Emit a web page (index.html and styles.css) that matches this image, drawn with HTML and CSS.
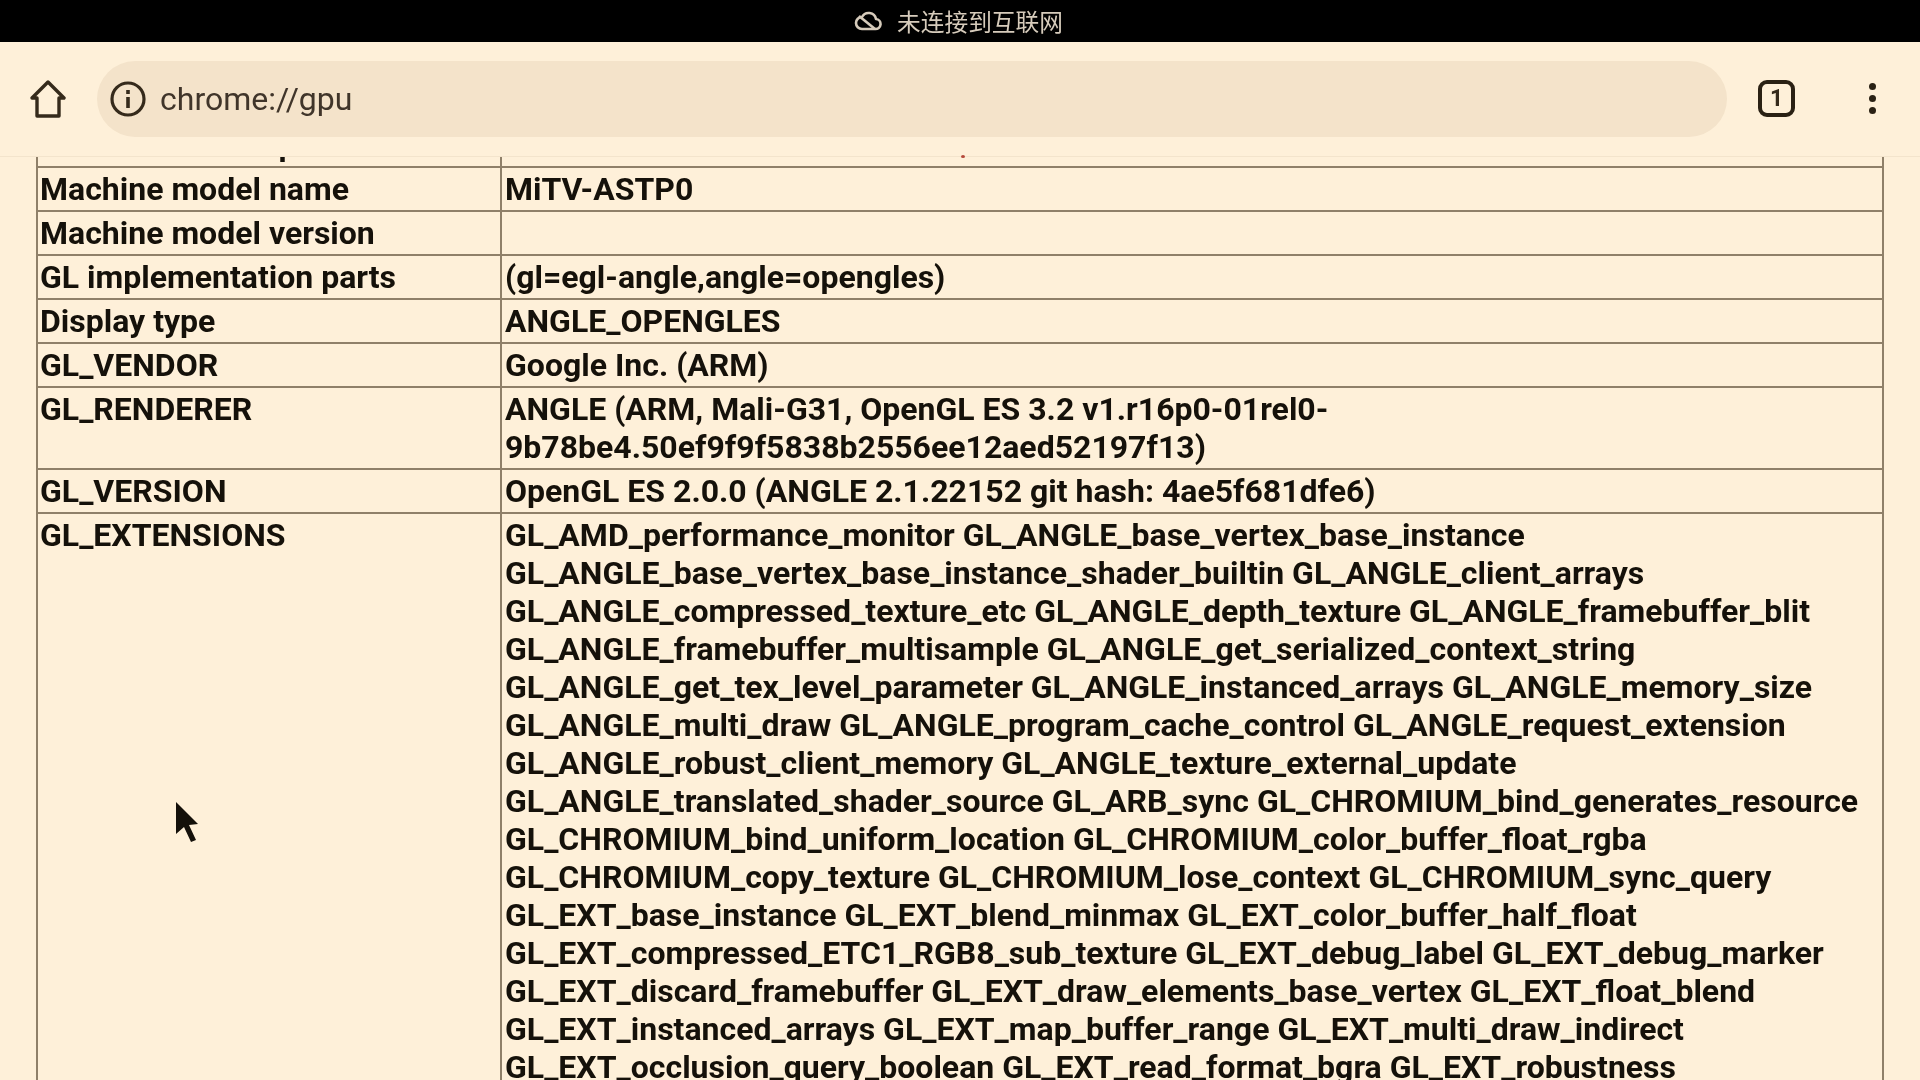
FILE: index.html
```html
<!DOCTYPE html>
<html lang="zh">
<head>
  <meta charset="UTF-8">
  <title>chrome://gpu</title>
  <link rel="stylesheet" href="styles.css">
</head>
<body>
  <div class="statusbar">
    <svg class="cloud" width="28" height="20" viewBox="0 0 28 20" fill="none" stroke="currentColor" stroke-width="2.6" stroke-linejoin="round">
      <path d="M8 18h13a5 5 0 0 0 1-10 7.500 7.500 0 0 0-14-2 6 6 0 0 0 0 12z"/>
      <path d="M5 5l16 13"/>
    </svg>
    <span>未连接到互联网</span>
  </div>
  <header class="toolbar">
    <svg class="home" width="36" height="38" viewBox="0 0 36 38" fill="none" stroke="currentColor" stroke-width="3.400" stroke-linejoin="round">
      <path d="M2 18L18 2l16 16h-5v18H7V18z"/>
    </svg>
    <div class="omnibox">
      <svg width="36" height="36" viewBox="0 0 36 36" fill="none" stroke="currentColor" stroke-width="3.200">
        <circle cx="18" cy="18" r="16"/>
        <path d="M18 16v11" stroke-width="3.600"/>
        <path d="M18 9v4" stroke-width="3.600"/>
      </svg>
      <span class="url">chrome://gpu</span>
    </div>
    <div class="tabs">1</div>
    <div class="menu"><i></i><i></i><i></i></div>
  </header>
  <main class="content">
    <table class="info">
      <colgroup><col class="col-key"><col></colgroup>
      <tr><th>Max. MSAA samples</th><td></td></tr>
      <tr><th>Machine model name</th><td>MiTV-ASTP0</td></tr>
      <tr><th>Machine model version</th><td></td></tr>
      <tr><th>GL implementation parts</th><td>(gl=egl-angle,angle=opengles)</td></tr>
      <tr><th>Display type</th><td>ANGLE_OPENGLES</td></tr>
      <tr><th>GL_VENDOR</th><td>Google Inc. (ARM)</td></tr>
      <tr>
        <th>GL_RENDERER</th>
        <td>
          <div>ANGLE (ARM, Mali-G31, OpenGL ES 3.2 v1.r16p0-01rel0-</div>
          <div>9b78be4.50ef9f9f5838b2556ee12aed52197f13)</div>
        </td>
      </tr>
      <tr><th>GL_VERSION</th><td>OpenGL ES 2.0.0 (ANGLE 2.1.22152 git hash: 4ae5f681dfe6)</td></tr>
      <tr>
        <th>GL_EXTENSIONS</th>
        <td>
          <div>GL_AMD_performance_monitor GL_ANGLE_base_vertex_base_instance</div>
          <div>GL_ANGLE_base_vertex_base_instance_shader_builtin GL_ANGLE_client_arrays</div>
          <div>GL_ANGLE_compressed_texture_etc GL_ANGLE_depth_texture GL_ANGLE_framebuffer_blit</div>
          <div>GL_ANGLE_framebuffer_multisample GL_ANGLE_get_serialized_context_string</div>
          <div>GL_ANGLE_get_tex_level_parameter GL_ANGLE_instanced_arrays GL_ANGLE_memory_size</div>
          <div>GL_ANGLE_multi_draw GL_ANGLE_program_cache_control GL_ANGLE_request_extension</div>
          <div>GL_ANGLE_robust_client_memory GL_ANGLE_texture_external_update</div>
          <div>GL_ANGLE_translated_shader_source GL_ARB_sync GL_CHROMIUM_bind_generates_resource</div>
          <div>GL_CHROMIUM_bind_uniform_location GL_CHROMIUM_color_buffer_float_rgba</div>
          <div>GL_CHROMIUM_copy_texture GL_CHROMIUM_lose_context GL_CHROMIUM_sync_query</div>
          <div>GL_EXT_base_instance GL_EXT_blend_minmax GL_EXT_color_buffer_half_float</div>
          <div>GL_EXT_compressed_ETC1_RGB8_sub_texture GL_EXT_debug_label GL_EXT_debug_marker</div>
          <div>GL_EXT_discard_framebuffer GL_EXT_draw_elements_base_vertex GL_EXT_float_blend</div>
          <div>GL_EXT_instanced_arrays GL_EXT_map_buffer_range GL_EXT_multi_draw_indirect</div>
          <div>GL_EXT_occlusion_query_boolean GL_EXT_read_format_bgra GL_EXT_robustness</div>
        </td>
      </tr>
    </table>
  </main>
  <i class="speck"></i>
  <svg class="cursor" width="30" height="44" viewBox="0 0 30 44">
    <path d="M2 2l22 22-9 1 7 15-5 2-7-15-8 7z" fill="#14100a"/>
  </svg>
</body>
</html>
```

FILE: styles.css
```css
* {
  box-sizing: border-box;
  margin: 0;
  padding: 0;
}
body {
  display: flex;
  flex-direction: column;
  height: 100vh;
  overflow: hidden;
  background: #fef0d9;
  color: #15110a;
  font-family: Roboto, "Noto Sans CJK SC", sans-serif;
  filter: blur(0.5px);
}
.statusbar {
  display: flex;
  justify-content: center;
  align-items: center;
  gap: 15px;
  flex: none;
  height: 42px;
  padding-right: 3px;
  background: #000;
  color: #d6cbbb;
  font-family: "Noto Sans CJK SC", sans-serif;
  font-size: 23.700px;
}
.toolbar {
  display: flex;
  align-items: center;
  flex: none;
  height: 115px;
  padding: 1px 0 2px 30px;
  border-bottom: 1px solid #f3e4cc;
  color: #352a1b;
}
.home {
  flex: none;
}
.omnibox {
  display: flex;
  align-items: center;
  gap: 14px;
  width: 1630px;
  height: 76px;
  margin-left: 31px;
  padding-left: 13px;
  border-radius: 38px;
  background: #f4e3ca;
}
.url {
  font-size: 32px;
  color: #40352a;
}
.tabs {
  display: flex;
  justify-content: center;
  align-items: center;
  flex: none;
  width: 37px;
  height: 37px;
  margin-left: 31px;
  border: 4px solid #2a2114;
  border-radius: 9px;
  font-size: 23px;
  font-weight: 700;
}
.menu {
  display: flex;
  flex-direction: column;
  gap: 5px;
  margin-left: 74px;
}
.menu i {
  width: 7px;
  height: 7px;
  border-radius: 50%;
  background: #2a2114;
}
.content {
  flex: 1;
  min-height: 0;
  overflow: hidden;
  padding: 0 36px;
}
.info {
  width: 100%;
  margin-top: -35px;
  border-collapse: collapse;
  table-layout: fixed;
  font-size: 32px;
  line-height: 38px;
  text-align: left;
}
.col-key {
  width: 464px;
}
.info th,
.info td {
  padding: 2px 3px;
  border: 2px solid #8f8069;
  font-weight: 700;
  vertical-align: top;
  white-space: nowrap;
}
.info th {
  padding-left: 2px;
}
.speck {
  position: absolute;
  left: 961px;
  top: 155px;
  width: 4px;
  height: 3px;
  border-radius: 50%;
  background: #b5483a;
}
.cursor {
  position: absolute;
  left: 174px;
  top: 800px;
}
```
